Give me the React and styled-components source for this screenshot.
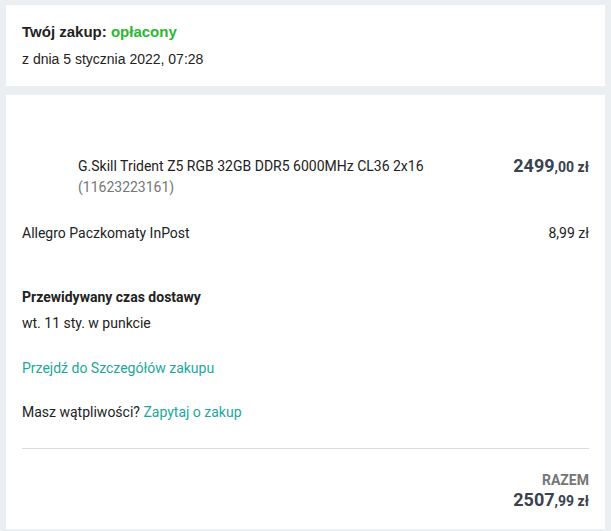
import React from "react";
import styled, { createGlobalStyle } from "styled-components";

const GlobalStyle = createGlobalStyle`
  html, body {
    margin: 0;
    background: #eceff1;
  }
  body {
    padding: 5px 6px;
    font-family: Roboto, "Liberation Sans", Arial, sans-serif;
    font-size: 14px;
    color: #222;
  }
`;

const Page = styled.div`
  display: flex;
  flex-direction: column;
  gap: 9px;
`;

const Card = styled.div`
  background: #fff;
  padding: 16px;
`;

const Title = styled.h2`
  margin: 0;
  font-family: "Liberation Sans", Arial, sans-serif;
  font-size: 15px;
  font-weight: 700;
  line-height: 20px;
  padding-top: 1px;
  color: #222;
`;

const Paid = styled.span`
  color: #2bb733;
`;

const DateLine = styled.div`
  font-family: "Liberation Sans", Arial, sans-serif;
  font-size: 14px;
  line-height: 20px;
  margin-top: 7px;
  padding-bottom: 1px;
`;

const Items = styled.div`
  padding-top: 45px;
`;

const ProductRow = styled.div`
  display: flex;
  align-items: flex-start;
  gap: 8px;
`;

const Thumb = styled.div`
  width: 48px;
  height: 40px;
  flex: none;
`;

const ProductInfo = styled.div`
  flex: 1;
  line-height: 20px;
`;

const ProductId = styled.div`
  color: #767676;
  margin-top: 1px;
`;

const Price = styled.div`
  color: #39424e;
  font-weight: 700;
  font-size: 18px;
  line-height: 20px;
  white-space: nowrap;
  span {
    font-size: 14px;
  }
`;

const Row = styled.div`
  display: flex;
  justify-content: space-between;
  line-height: 20px;
  margin-top: ${(p) => p.$top || 0}px;
`;

const Heading = styled.div`
  font-weight: 700;
  line-height: 20px;
  margin-top: 44px;
`;

const Text = styled.div`
  line-height: 20px;
  margin-top: ${(p) => p.$top || 0}px;
`;

const Link = styled.a`
  color: #1ba89a;
  text-decoration: none;
  cursor: pointer;
`;

const Divider = styled.hr`
  border: 0;
  border-top: 1px solid #dcdcdc;
  margin: 26px 0 0;
`;

const Summary = styled.div`
  display: flex;
  flex-direction: column;
  align-items: flex-end;
  margin-top: 21px;
  padding-bottom: 2px;
`;

const Label = styled.div`
  color: #767676;
  font-weight: 700;
  line-height: 20px;
`;

export default function App() {
  return (
    <>
      <GlobalStyle />
      <Page>
        <Card>
          <Title>
            Twój zakup: <Paid>opłacony</Paid>
          </Title>
          <DateLine>z dnia 5 stycznia 2022, 07:28</DateLine>
        </Card>
        <Card>
          <Items>
            <ProductRow>
              <Thumb />
              <ProductInfo>
                <div>G.Skill Trident Z5 RGB 32GB DDR5 6000MHz CL36 2x16</div>
                <ProductId>(11623223161)</ProductId>
              </ProductInfo>
              <Price>
                2499<span>,00 zł</span>
              </Price>
            </ProductRow>
            <Row $top={26}>
              <span>Allegro Paczkomaty InPost</span>
              <span>8,99 zł</span>
            </Row>
          </Items>
          <Heading>Przewidywany czas dostawy</Heading>
          <Text $top={6}>wt. 11 sty. w punkcie</Text>
          <Text $top={25}>
            <Link>Przejdź do Szczegółów zakupu</Link>
          </Text>
          <Text $top={24}>
            Masz wątpliwości? <Link>Zapytaj o zakup</Link>
          </Text>
          <Divider />
          <Summary>
            <Label>RAZEM</Label>
            <Price>
              2507<span>,99 zł</span>
            </Price>
          </Summary>
        </Card>
      </Page>
    </>
  );
}
